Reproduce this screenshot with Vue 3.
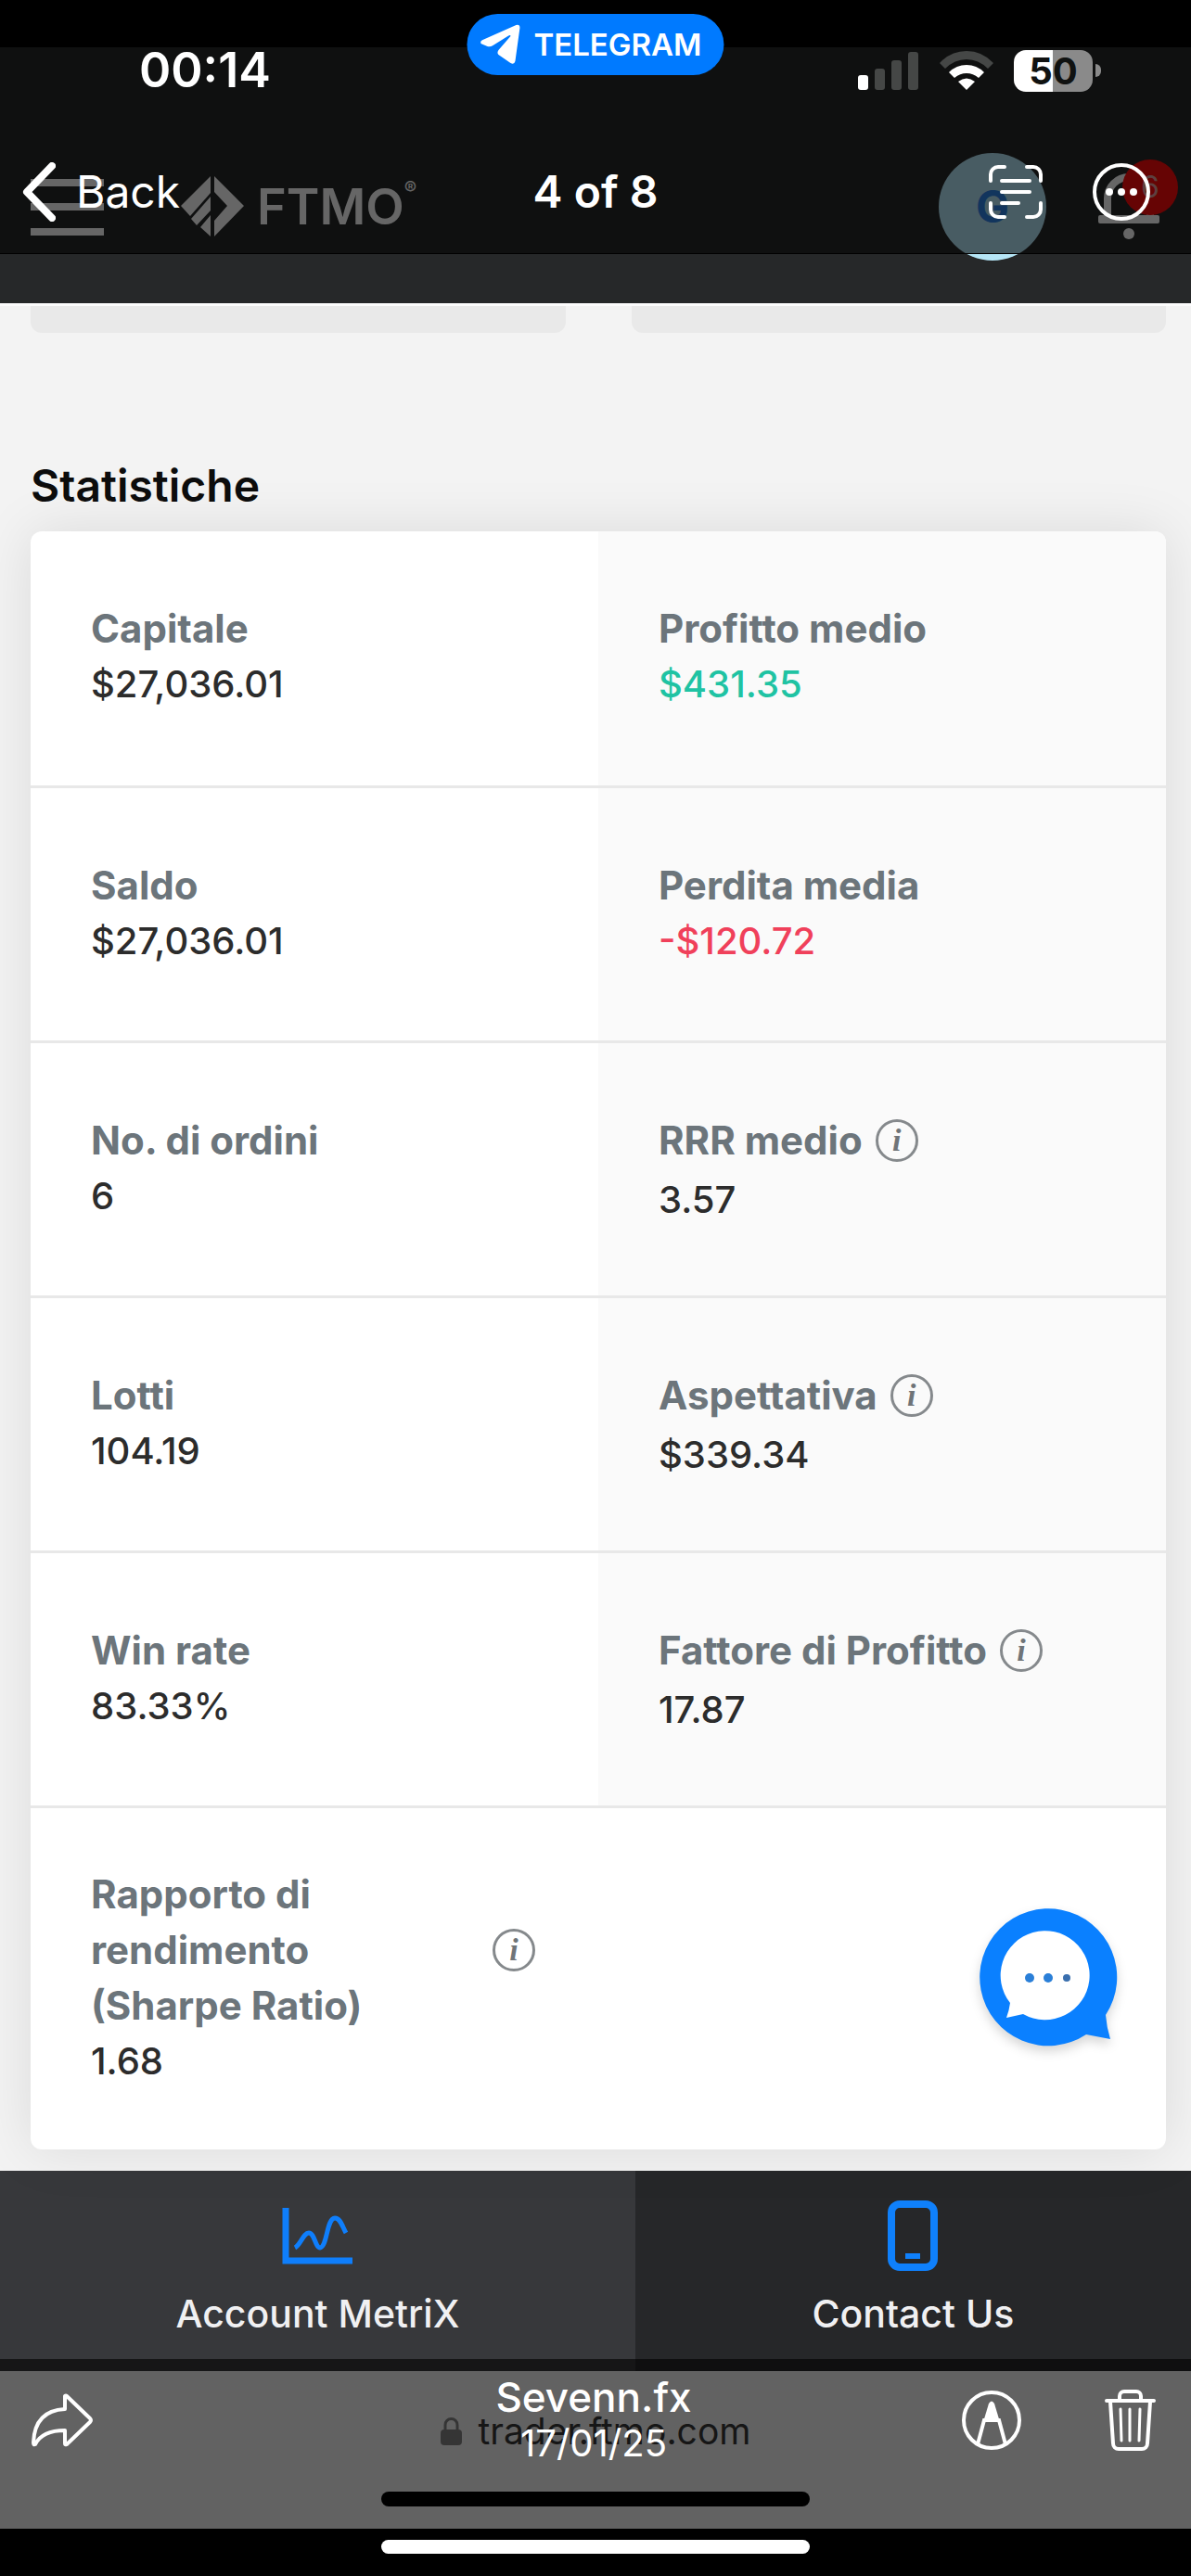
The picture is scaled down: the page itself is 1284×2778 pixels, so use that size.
<script setup>
const stats = [
  { label: ['Capitale'], value: '$27,036.01' },
  { label: ['Profitto medio'], value: '$431.35', tone: 'gain' },
  { label: ['Saldo'], value: '$27,036.01' },
  { label: ['Perdita media'], value: '-$120.72', tone: 'loss' },
  { label: ['No. di ordini'], value: '6' },
  { label: ['RRR medio'], value: '3.57', info: true },
  { label: ['Lotti'], value: '104.19' },
  { label: ['Aspettativa'], value: '$339.34', info: true },
  { label: ['Win rate'], value: '83.33%' },
  { label: ['Fattore di Profitto'], value: '17.87', info: true },
  { label: ['Rapporto di', 'rendimento', '(Sharpe Ratio)'], value: '1.68', info: true, wide: true },
]
</script>

<template>
  <div class="viewer">
    <!-- Web page shown in the photo -->
    <div class="photo">
      <header class="site-header">
        <button class="plain" aria-label="Menu">
          <svg width="79" height="61" viewBox="0 0 79 61" fill="#fff">
            <rect width="79" height="8" /><rect y="26" width="79" height="8" /><rect y="53" width="79" height="8" />
          </svg>
        </button>
        <a class="brand" href="#">
          <svg width="68" height="66" viewBox="0 0 68 66" fill="#fff">
            <path d="M32 0V18L10 43L0 32Z" />
            <path d="M32 22V37L17 53L11 46Z" />
            <path d="M32 42V65L21 55Z" />
            <path d="M36 0L68 32L36 65V48L50 32L36 17Z" />
          </svg>
          <span class="brand-name">FTMO<sup>®</sup></span>
        </a>
        <button class="avatar">G</button>
        <button class="plain bell" aria-label="Notifications">
          <svg width="66" height="78" viewBox="0 0 66 78">
            <path d="M10 52V30a23 23 0 0 1 46 0V52" fill="none" stroke="#fff" stroke-width="8" />
            <rect y="48" width="66" height="9" rx="2" fill="#fff" />
            <circle cx="33" cy="68" r="6" fill="#fff" />
          </svg>
          <span class="badge">6</span>
        </button>
      </header>

      <main class="content">
        <div class="peeks"><div class="peek"></div><div class="peek"></div></div>
        <h2>Statistiche</h2>
        <dl class="card">
          <div v-for="s in stats" :key="s.value + s.label[0]" class="cell" :class="{ wide: s.wide, noted: s.info }">
            <dt>
              <span class="label"><span v-for="line in s.label" :key="line" class="line">{{ line }}</span></span>
              <button v-if="s.info" class="info" aria-label="Info">i</button>
            </dt>
            <dd :class="s.tone">{{ s.value }}</dd>
          </div>
        </dl>
        <button class="plain chat" aria-label="Chat">
          <svg width="150" height="150" viewBox="0 0 150 150">
            <path d="M116 136A74 74 0 1 1 137 115Q138 128 142 141Z" fill="#0a80ff" />
            <path d="M34 102A48 48 0 1 1 48 114L30 118Q33 110 34 102Z" fill="#fff" />
            <circle cx="55" cy="75" r="5" fill="#2a7fd8" />
            <circle cx="75" cy="75" r="5" fill="#2a7fd8" />
            <circle cx="95" cy="75" r="4" fill="#3a6fae" />
          </svg>
        </button>
      </main>

      <nav class="tabs">
        <a class="tab active" href="#">
          <svg width="76" height="76" viewBox="0 0 76 76" fill="none" stroke="#0f7efb">
            <path d="M4 8V65H76" stroke-width="7" />
            <path d="M14 51C20 48 23 35 29 35S36 51 41 51C49 50 48 19 57 19C63 19 65 28 69 35" stroke-width="5" />
          </svg>
          <span>Account MetriX</span>
        </a>
        <a class="tab" href="#">
          <svg width="54" height="76" viewBox="0 0 54 76" fill="none" stroke="#0f80fb">
            <rect x="4" y="4" width="46" height="68" rx="9" stroke-width="8" />
            <path d="M19 60H35" stroke-width="6" />
          </svg>
          <span>Contact Us</span>
        </a>
      </nav>

      <footer class="browser-bar">
        <div class="url">
          <svg width="23" height="32" viewBox="0 0 23 32">
            <rect y="14" width="23" height="17" rx="4" fill="#858585" />
            <path d="M5 15V9a6 6 0 0 1 13 0V15" fill="none" stroke="#858585" stroke-width="3" />
          </svg>
          <span>trader.ftmo.com</span>
        </div>
        <div class="photo-indicator"></div>
      </footer>
    </div>

    <!-- Photo viewer chrome -->
    <div class="chrome-top">
      <button class="pill">
        <svg width="44" height="44" viewBox="0 0 44 44" fill="#fff">
          <path d="M1 21Q0 18 3 17L39 1Q43 0 43 4L38 40Q37 44 33 42L20 33Q18 31 20 28L33 13Q33 11 30 13L14 23Q11 25 8 24Z" />
        </svg>
        TELEGRAM
      </button>
      <div class="status">
        <span class="time">00:14</span>
        <svg class="signal" width="66" height="42" viewBox="0 0 66 42" fill="#454746">
          <rect y="26" width="11" height="16" rx="3" fill="#fff" /><rect x="18" y="19" width="11" height="23" rx="3" />
          <rect x="36" y="10" width="11" height="32" rx="3" /><rect x="54" y="1" width="11" height="41" rx="3" />
        </svg>
        <svg class="wifi" width="58" height="42" viewBox="0 0 58 42">
          <path d="M0 13Q12 0 29 0T58 13L52 19Q42 9 29 9T6 19Z" fill="#454746" />
          <path d="M10 23Q18 15 29 15T48 23L42 29Q36 24 29 24T16 29Z" fill="#fff" />
          <path d="M20 33Q29 26 38 33L29 42Z" fill="#fff" />
        </svg>
        <span class="battery">50</span>
        <span class="nub"></span>
      </div>
      <div class="toolbar">
        <button class="plain back">
          <svg width="36" height="64" viewBox="0 0 36 64" fill="none" stroke="#fff" stroke-width="8" stroke-linecap="round" stroke-linejoin="round">
            <path d="M32 4L5 32L32 60" />
          </svg>
          Back
        </button>
        <h1>4 of 8</h1>
        <div class="tools">
          <button class="plain" aria-label="Live text">
            <svg width="58" height="58" viewBox="0 0 58 58" fill="none" stroke="#fff" stroke-width="4" stroke-linecap="round">
              <path d="M2 17V10a8 8 0 0 1 8-8h7M41 2h7a8 8 0 0 1 8 8v7M56 41v7a8 8 0 0 1-8 8h-7M17 56h-7a8 8 0 0 1-8-8v-7M14 17H44M14 29H44M14 41H32" />
            </svg>
          </button>
          <button class="plain" aria-label="More">
            <svg width="62" height="62" viewBox="0 0 62 62" fill="#fff">
              <circle cx="31" cy="31" r="29" fill="none" stroke="#fff" stroke-width="4" />
              <circle cx="18" cy="31" r="4" /><circle cx="31" cy="31" r="4" /><circle cx="44" cy="31" r="4" />
            </svg>
          </button>
        </div>
      </div>
    </div>

    <div class="chrome-bottom">
      <div class="actions">
        <button class="plain share" aria-label="Share">
          <svg width="66" height="58" viewBox="0 0 66 58" fill="none" stroke="#fff" stroke-width="4" stroke-linejoin="round">
            <path d="M36 3Q37 2 38 3L63 27Q65 29 63 31L38 55Q36 56 36 54V40C20 40 9 45 4 55Q2 56 2 53C3 29 15 18 36 17Z" />
          </svg>
        </button>
        <div class="caption">
          <span class="who">Sevenn.fx</span>
          <time datetime="2025-01-17">17/01/25</time>
        </div>
        <div class="edit">
          <button class="plain" aria-label="Markup">
            <svg width="64" height="64" viewBox="0 0 64 64" fill="none" stroke="#fff" stroke-width="4">
              <circle cx="32" cy="32" r="30" />
              <path d="M17 58L24 32H40L47 58" />
              <path d="M29 14Q32 9 35 14L41 34H23Z" fill="#fff" stroke="none" />
            </svg>
          </button>
          <button class="plain" aria-label="Delete">
            <svg width="55" height="66" viewBox="0 0 55 66" fill="none" stroke="#fff" stroke-width="4" stroke-linecap="round">
              <path d="M2 12H53M16 11V7a5 5 0 0 1 5-5H34a5 5 0 0 1 5 5v4M6 13L9 58a6 6 0 0 0 6 6H40a6 6 0 0 0 6-6L49 13" />
              <path d="M17 21L18 55M27 21V55M38 21L37 55" stroke-width="3" />
            </svg>
          </button>
        </div>
      </div>
      <div class="home"></div>
    </div>
  </div>
</template>

<style>
body {
  margin: 0;
  background: #000;
}
</style>

<style scoped>
.viewer {
  position: relative;
  padding: 51px 0;
  background: #000;
  font-family: Inter, "Liberation Sans", sans-serif;
  font-size: 40px;
  line-height: 60px;
}
button {
  font: inherit;
  color: inherit;
  border: 0;
  padding: 0;
}
.plain {
  display: flex;
  align-items: center;
  background: none;
}
svg {
  display: block;
  flex: none;
}
a {
  color: inherit;
  text-decoration: none;
}

.site-header {
  display: flex;
  align-items: center;
  padding: 114px 14px 46px 33px;
  background: #262829;
  color: #fff;
}
.brand {
  display: flex;
  align-items: center;
  gap: 14px;
  margin-left: 83px;
}
.brand-name {
  display: flex;
  font-size: 54px;
  font-weight: 600;
}
.brand-name sup {
  font-size: 20px;
  font-weight: 400;
  line-height: 20px;
}
.avatar {
  width: 116px;
  height: 116px;
  margin-left: auto;
  border-radius: 50%;
  background: #b5e6f7;
  color: #2f85e8;
  font-size: 48px;
  font-weight: 700;
}
.bell {
  position: relative;
  width: 86px;
  height: 116px;
  margin-left: 56px;
}
.badge {
  position: absolute;
  top: 7px;
  right: 0;
  width: 60px;
  height: 60px;
  border-radius: 50%;
  background: #ff0a0a;
  color: #e8a0a0;
  font-size: 32px;
}

.content {
  position: relative;
  padding: 0 27px 23px 33px;
  border-top: 3px solid #fcfcfc;
  background: #f3f3f3;
}
.peeks {
  display: grid;
  grid-template-columns: 1fr 1fr;
  gap: 71px;
}
.peek {
  height: 29px;
  border-radius: 0 0 12px 12px;
  background: #e9e9e9;
}
h2 {
  position: relative;
  z-index: 1;
  margin: 135px 0 19px;
  font-size: 48px;
  font-weight: 600;
  color: #0c0c0c;
}
.card {
  display: grid;
  grid-template-columns: 1fr 1fr;
  margin: 0;
  border-radius: 12px;
  overflow: hidden;
  background: #fff;
  box-shadow: 0 0 60px rgba(0, 0, 0, 0.1);
}
.cell {
  box-sizing: border-box;
  min-height: 275px;
  padding: 75px 65px 60px;
  border-top: 3px solid #e8e8e8;
}
.cell:nth-child(-n + 2) {
  min-height: 274px;
  border-top: 0;
}
.cell:nth-child(even) {
  background: #fafafa;
}
.cell.noted dt {
  margin-bottom: 4px;
}
.cell.wide {
  grid-column: 1 / -1;
  min-height: 371px;
  padding-top: 63px;
}
.cell.wide dt {
  width: 50%;
  box-sizing: border-box;
  padding-right: 68px;
  margin-bottom: 0;
}
.cell.wide .label {
  flex: 1;
}
dt {
  display: flex;
  align-items: center;
  gap: 14px;
  color: #6c757b;
  font-size: 42px;
  font-weight: 700;
}
.line {
  display: block;
}
.info {
  box-sizing: border-box;
  width: 46px;
  height: 46px;
  border: 3px solid #85898c;
  border-radius: 50%;
  background: none;
  color: #6f7478;
  font: italic 700 34px/38px "Liberation Serif", serif;
}
dd {
  margin: 0;
  color: #2c2c2c;
  font-weight: 500;
}
.gain {
  color: #1fc3a3;
}
.loss {
  color: #f0405a;
}
.chat {
  position: absolute;
  right: 79px;
  bottom: 133px;
  filter: drop-shadow(0 6px 6px rgba(0, 0, 0, 0.16));
}

.tabs {
  display: flex;
  color: #f0f0f2;
  font-size: 41px;
  font-weight: 500;
}
.tab {
  flex: 7 0 0;
  display: flex;
  flex-direction: column;
  align-items: center;
  gap: 16px;
  padding: 32px 0;
  background: #262729;
}
.tab.active {
  flex-grow: 8;
  background: #37383b;
}

.browser-bar {
  display: flex;
  flex-direction: column;
  align-items: center;
  padding: 35px 0 24px;
  background: #f6f6f6;
  color: #383838;
}
.url {
  display: flex;
  align-items: center;
  gap: 18px;
  font-size: 39px;
}
.photo-indicator {
  width: 36%;
  height: 16px;
  margin-top: 35px;
  border-radius: 8px;
  background: #000;
}

.chrome-top,
.chrome-bottom {
  position: absolute;
  left: 0;
  right: 0;
  z-index: 2;
  background: rgba(0, 0, 0, 0.6);
  color: #fff;
}
.chrome-top {
  top: 0;
  padding-top: 51px;
  border-bottom: 1px solid #000;
}
.pill {
  position: absolute;
  top: 15px;
  left: 50%;
  transform: translateX(-50%);
  display: flex;
  align-items: center;
  gap: 14px;
  height: 66px;
  padding: 0 24px 0 14px;
  border-radius: 33px;
  background: #007aff;
  font-size: 33px;
  font-weight: 600;
}
.status {
  display: flex;
  align-items: center;
  height: 50px;
  padding: 0 97px 0 150px;
}
.time {
  font-size: 52px;
  font-weight: 600;
}
.signal {
  margin-left: auto;
}
.wifi {
  margin: 0 22px;
}
.battery {
  width: 85px;
  height: 45px;
  border-radius: 13px;
  background: linear-gradient(90deg, #fff 50%, #8a8a8a 50%);
  color: #101211;
  font-weight: 700;
  line-height: 45px;
  text-align: center;
}
.nub {
  width: 6px;
  height: 14px;
  margin-left: 3px;
  border-radius: 0 6px 6px 0;
  background: #8a8a8a;
}
.toolbar {
  display: grid;
  grid-template-columns: 1fr auto 1fr;
  align-items: center;
  padding: 74px 24px 34px;
  font-size: 48px;
}
.back {
  gap: 22px;
  justify-self: start;
}
h1 {
  margin: 0;
  font-size: 48px;
  font-weight: 600;
}
.tools {
  display: flex;
  justify-content: flex-end;
  gap: 54px;
  padding-right: 20px;
}

.chrome-bottom {
  bottom: 0;
}
.actions {
  display: grid;
  grid-template-columns: 1fr auto 1fr;
  align-items: center;
  padding: 16px 38px 0 34px;
}
.caption {
  display: flex;
  flex-direction: column;
  align-items: center;
  line-height: 50px;
}
.who {
  font-size: 44px;
  font-weight: 500;
}
.share {
  justify-self: start;
}
.edit {
  display: flex;
  justify-content: flex-end;
  align-items: center;
  gap: 90px;
}
.home {
  width: 36%;
  height: 15px;
  margin: 79px auto 24px;
  border-radius: 8px;
  background: #fff;
}
</style>
